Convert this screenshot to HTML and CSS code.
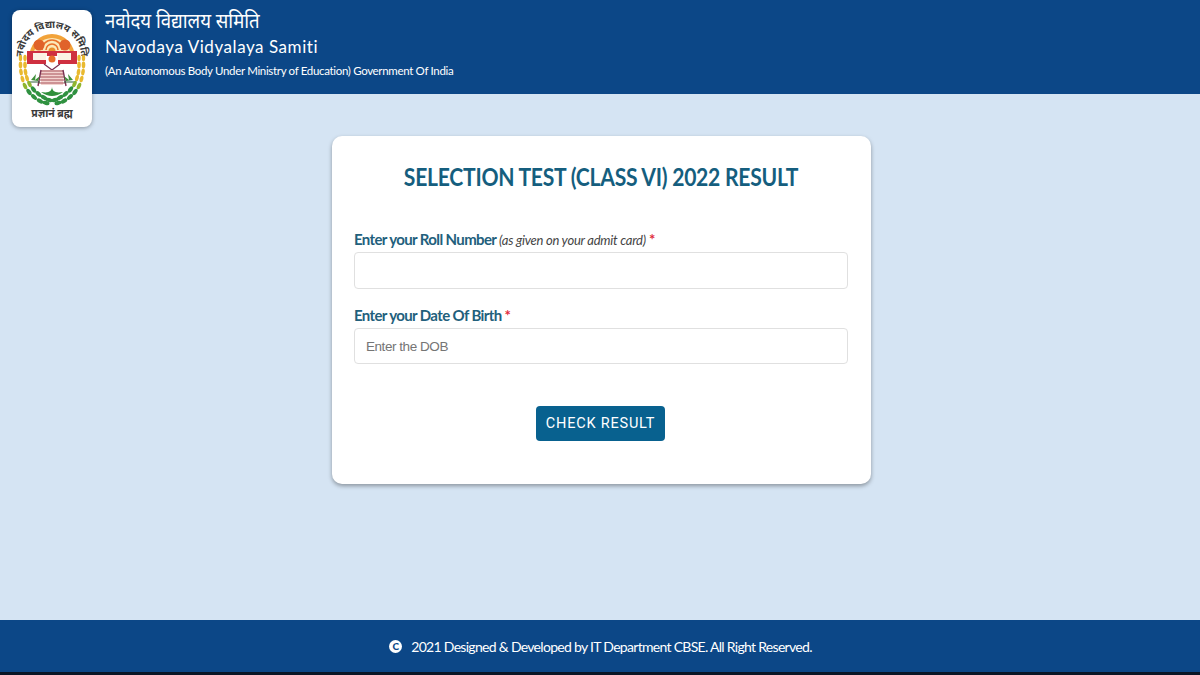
FILE: index.html
```html
<!DOCTYPE html>
<html lang="en">

<head>
    <meta charset="UTF-8">
    <title>Selection Test Result</title>
    <link rel="stylesheet" href="styles.css">
</head>

<body>
    <header class="top-bar">
        <div class="logo-card">
            <svg class="logo" viewBox="0 0 80 116" width="80" height="116" aria-hidden="true">
                <!-- curved hindi name -->
                <path id="arc" d="M11 47 A29 29 0 0 1 69 47" fill="none"/>
                <text class="logo-arc"><textPath href="#arc" startOffset="50%" text-anchor="middle">नवोदय विद्यालय समिति</textPath></text>
                <!-- arch with people -->
                <path d="M17 48 A23 24 0 0 1 63 48 Z" fill="#f2a33a"/>
                <path d="M21 48 A19 20 0 0 1 59 48 Z" fill="#fbe9b8"/>
                <path d="M30 40 a10 10 0 0 1 20 0" fill="none" stroke="#e8702a" stroke-width="1.6"/>
                <path d="M34 40 a6 6 0 0 1 12 0" fill="none" stroke="#e8702a" stroke-width="1.6"/>
                <circle cx="27" cy="35" r="5.5" fill="#e0622a"/>
                <circle cx="53" cy="35" r="5.5" fill="#e0622a"/>
                <circle cx="40" cy="41" r="3.5" fill="#e8902a"/>
                <path d="M15 41 H65 V54 H15 Z" fill="#cf3040"/>
                <path d="M21 43 H35 V50 H21 Z M45 43 H59 V50 H45 Z" fill="#fbf3e4"/>
                <path d="M34 46 H46 V60 H34 Z" fill="#fff"/>
                <circle cx="40" cy="49" r="3.5" fill="#e8702a"/>
                <path d="M32 54 L40 60 L48 54" fill="none" stroke="#7a3050" stroke-width="1.2"/>
                <!-- rail steps -->
                <path d="M29 60 H51 V75 H29 Z" fill="#f3d3cf"/>
                <path d="M29 61 H51 M29 64 H51 M28 67 H52 M28 70 H52 M27 73 H53" stroke="#a8525a" stroke-width="1.1"/>
                <path d="M29 60 L26 76 M51 60 L54 76" stroke="#7a3050" stroke-width="1.4"/>
                <!-- little plants -->
                <path d="M19 70 L24 64 L23 70 L28 66 L26 71 Z M61 70 L56 64 L57 70 L52 66 L54 71 Z" fill="#3f8f3a"/>
                <path d="M17 72 H28 M52 72 H63" stroke="#2f5f3a" stroke-width="1.2"/>
                <path d="M29 82 Q40 90 51 82 Q40 84 40 77 Q40 84 29 82 Z" fill="#2f8f3a"/>
                <!-- wreath, one half drawn and mirrored -->
                <g id="wreath">
                    <g fill="#e9b92f">
                        <ellipse cx="8.5" cy="48" rx="1.7" ry="3.2"/>
                        <ellipse cx="13" cy="48" rx="1.7" ry="3.2"/>
                        <ellipse cx="8.5" cy="55" rx="1.8" ry="3.4"/>
                        <ellipse cx="13" cy="55" rx="1.8" ry="3.4"/>
                        <ellipse cx="9" cy="62" rx="1.8" ry="3.4" transform="rotate(-8 9 62)"/>
                        <ellipse cx="13.5" cy="62" rx="1.8" ry="3.4" transform="rotate(-8 13.5 62)"/>
                        <ellipse cx="10.5" cy="69" rx="1.8" ry="3.4" transform="rotate(-14 10.5 69)"/>
                        <ellipse cx="15" cy="68" rx="1.8" ry="3.4" transform="rotate(-14 15 68)"/>
                    </g>
                    <g fill="#8fb52f">
                        <ellipse cx="13" cy="76" rx="1.9" ry="3.5" transform="rotate(-24 13 76)"/>
                        <ellipse cx="17.5" cy="74" rx="1.9" ry="3.5" transform="rotate(-24 17.5 74)"/>
                    </g>
                    <g fill="#2f9140">
                        <ellipse cx="17" cy="82" rx="2" ry="3.6" transform="rotate(-35 17 82)"/>
                        <ellipse cx="21.5" cy="79.5" rx="2" ry="3.6" transform="rotate(-35 21.5 79.5)"/>
                        <ellipse cx="22" cy="87" rx="2" ry="3.6" transform="rotate(-48 22 87)"/>
                        <ellipse cx="26.5" cy="84" rx="2" ry="3.6" transform="rotate(-48 26.5 84)"/>
                        <ellipse cx="28" cy="91" rx="2" ry="3.6" transform="rotate(-60 28 91)"/>
                        <ellipse cx="32" cy="87.5" rx="2" ry="3.6" transform="rotate(-60 32 87.5)"/>
                        <ellipse cx="34" cy="93" rx="2" ry="3.6" transform="rotate(-74 34 93)"/>
                        <ellipse cx="37" cy="90" rx="2" ry="3.6" transform="rotate(-74 37 90)"/>
                    </g>
                </g>
                <use href="#wreath" transform="matrix(-1 0 0 1 80 0)"/>
                <text class="logo-motto" x="40" y="107" text-anchor="middle">प्रज्ञानं ब्रह्म</text>
            </svg>
        </div>
        <div class="org">
            <div class="org-hi">नवोदय विद्यालय समिति</div>
            <div class="org-en">Navodaya Vidyalaya Samiti</div>
            <div class="org-sub">(An Autonomous Body Under Ministry of Education) Government Of India</div>
        </div>
    </header>

    <main class="content">
        <form class="result-card">
            <h1>SELECTION TEST (CLASS VI) 2022 RESULT</h1>
            <div class="field">
                <label for="roll">Enter your Roll Number <em>(as given on your admit card)</em> <span class="req">*</span></label>
                <input id="roll" type="text">
            </div>
            <div class="field field-dob">
                <label for="dob">Enter your Date Of Birth <span class="req">*</span></label>
                <input id="dob" type="text" placeholder="Enter the DOB">
            </div>
            <button type="button" class="btn">CHECK RESULT</button>
        </form>
    </main>

    <footer class="bottom-bar">
        <span class="copy">C</span>
        <span>2021 Designed &amp; Developed by IT Department CBSE. All Right Reserved.</span>
    </footer>
</body>

</html>
```
FILE: styles.css
```css
* {
    margin: 0;
    padding: 0;
    box-sizing: border-box;
}

html,
body {
    height: 675px;
    overflow: hidden;
}

body {
    display: flex;
    flex-direction: column;
    background-color: #d5e4f3;
    font-family: Lato, "Noto Sans", sans-serif;
}

.top-bar {
    height: 94px;
    flex: none;
    display: flex;
    padding-left: 12px;
    background-color: #0c4787;
    color: #fff;
}

.logo-card {
    width: 80px;
    height: 117px;
    margin-top: 10px;
    flex: none;
    background-color: #fff;
    border-radius: 8px;
    box-shadow: 0 1px 4px rgba(0, 0, 0, .35);
}

.logo {
    display: block;
}

.logo-arc {
    font-size: 10px;
    font-weight: 700;
    fill: #3a3a3a;
}

.logo-motto {
    font-size: 10.5px;
    font-weight: 700;
    fill: #3a3a3a;
}

.org {
    margin-left: 13px;
    padding-top: 7px;
}

.org-hi {
    height: 26px;
    font-size: 20px;
    line-height: 26px;
    transform: scaleX(.93);
    transform-origin: left center;
}

.org-en {
    margin-top: 2px;
    font-size: 17px;
    line-height: 24px;
    letter-spacing: .55px;
}

.org-sub {
    margin-top: 4px;
    font-size: 11.5px;
    line-height: 16px;
    letter-spacing: -.33px;
}

.content {
    flex: 1;
    display: flex;
    justify-content: center;
    align-items: flex-start;
    padding-top: 42px;
}

.result-card {
    width: 539px;
    height: 348px;
    margin-left: 3px;
    padding: 26px 23px 0 22px;
    display: flex;
    flex-direction: column;
    background-color: #fff;
    border-radius: 10px;
    box-shadow: 0 2px 4px rgba(0, 0, 0, .35);
}

.result-card h1 {
    height: 30px;
    margin-bottom: 37px;
    color: #155e7e;
    font-size: 24px;
    font-weight: 700;
    line-height: 30px;
    text-align: center;
    letter-spacing: -.3px;
    transform: scaleX(.88);
}

.field {
    margin-bottom: 16px;
}

.field label {
    display: block;
    height: 20px;
    margin-bottom: 3px;
    color: #22607c;
    font-size: 15px;
    font-weight: 700;
    line-height: 20px;
    letter-spacing: -.62px;
}

.field em {
    color: #444;
    font-size: 13px;
    font-weight: 400;
    letter-spacing: -.25px;
}

.req {
    color: #e02b3c;
}

.field input {
    display: block;
    width: 100%;
    height: 37px;
    padding: 0 11px;
    background-color: #fff;
    border: 1px solid #e0e0e0;
    border-radius: 4px;
    font-family: "Liberation Sans", sans-serif;
    font-size: 13.5px;
    letter-spacing: -.45px;
}

.field input::placeholder {
    color: #757575;
}

.field-dob input {
    height: 36px;
}

.btn {
    width: 129px;
    height: 35px;
    margin: 26px 0 0 182px;
    align-self: flex-start;
    background-color: #08618f;
    border: 0;
    border-radius: 4px;
    color: #fff;
    font-family: Roboto, sans-serif;
    font-size: 14.5px;
    letter-spacing: .8px;
}

.bottom-bar {
    height: 55px;
    flex: none;
    display: flex;
    align-items: center;
    justify-content: center;
    gap: 9px;
    padding-left: 1px;
    background-color: #0c4787;
    border-bottom: 3px solid #0a1626;
    color: #fff;
    font-size: 14px;
    letter-spacing: -.7px;
}

.copy {
    width: 13px;
    height: 13px;
    display: flex;
    align-items: center;
    justify-content: center;
    background-color: #fff;
    border-radius: 50%;
    color: #0c4787;
    font-size: 10px;
    font-weight: 900;
    letter-spacing: 0;
}
```
